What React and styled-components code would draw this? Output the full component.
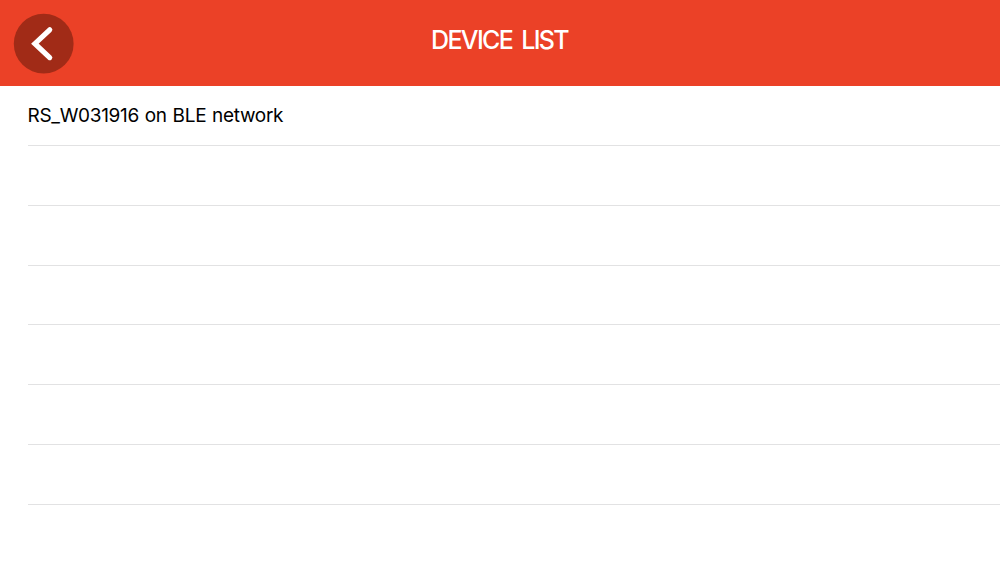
import React from "react";
import styled, { createGlobalStyle } from "styled-components";

const GlobalStyle = createGlobalStyle`
    * {
        box-sizing: border-box;
    }
    body {
        margin: 0;
        background: #fff;
        overflow: hidden;
    }
`
const Container = styled.div`
    height: 100vh;
    overflow: hidden;
    font-family: Inter, "Liberation Sans", sans-serif;
`
const Header = styled.header`
    display: grid;
    grid-template-columns: 60px 1fr 60px;
    align-items: start;
    height: 85.5px;
    padding: 14px 14px 0;
    background: #eb4127;
`
const BackButton = styled.button`
    width: 60px;
    height: 60px;
    padding: 0;
    border: none;
    background: transparent;
    cursor: pointer;

    svg {
        display: block;
        overflow: visible;
    }
`
const Title = styled.h1`
    margin: 11px 0 0;
    color: #fff;
    font-size: 25px;
    font-weight: 500;
    line-height: 30px;
    letter-spacing: -1.65px;
    word-spacing: 4px;
    text-indent: -1px;
    text-align: center;
    white-space: nowrap;
`
const List = styled.ul`
    margin: 0;
    padding: 0.8px 0 0 27.5px;
    list-style: none;
`
const Row = styled.li`
    display: flex;
    align-items: center;
    height: 59.8px;
    border-bottom: 1px solid #e2e2e3;
    color: #000;
    font-size: 19px;
    letter-spacing: -0.31px;
    word-spacing: 0.8px;
    white-space: nowrap;
`

const devices = ["RS_W031916 on BLE network", "", "", "", "", "", ""];

const App = () => {
    return (
        <>
            <GlobalStyle />
            <Container>
                <Header>
                    <BackButton aria-label="Back">
                        <svg width="60" height="60" viewBox="0 0 60 60" fill="none">
                            <circle cx="29.7" cy="29.7" r="29.9" fill="#a12b17" />
                            <path d="M35.7 15.8 L20.9 29.7 L35.7 43.6" stroke="#fff" strokeWidth="5.2" strokeLinecap="round" />
                        </svg>
                    </BackButton>
                    <Title>DEVICE LIST</Title>
                </Header>
                <List>
                    {devices.map((device, i) => (
                        <Row key={i}>{device}</Row>
                    ))}
                </List>
            </Container>
        </>
    );
};
export default App;
